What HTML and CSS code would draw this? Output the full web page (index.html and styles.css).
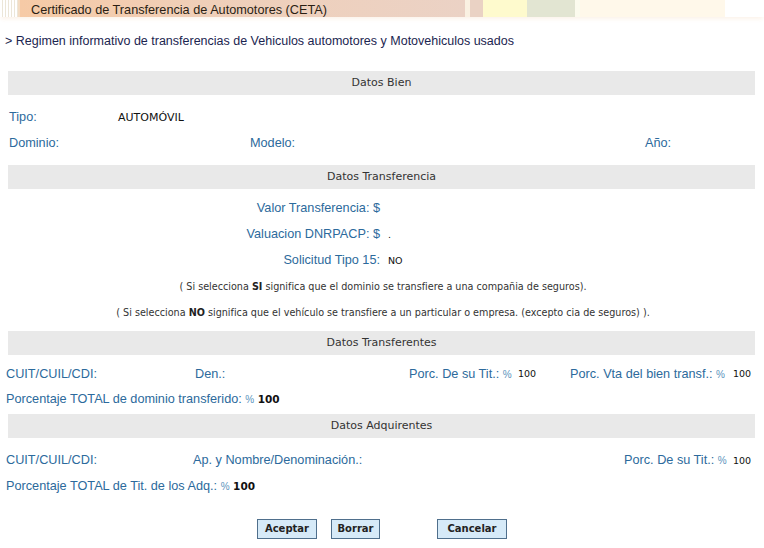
FILE: index.html
```html
<!DOCTYPE html>
<html lang="es">
<head>
<meta charset="utf-8">
<title>CETA</title>
<link rel="stylesheet" href="styles.css">
</head>
<body>
<div class="topbar">
  <div class="stripes"></div>
  <div class="seg-peach"><span class="title">Certificado de Transferencia de Automotores (CETA)</span></div>
  <div class="seg-gap"></div>
  <div class="seg-peach2"></div>
  <div class="seg-yellow"></div>
  <div class="seg-green"></div>
  <div class="seg-gap2"></div>
  <div class="seg-cream"></div>
</div>

<p class="subtitle">&gt; Regimen informativo de transferencias de Vehiculos automotores y Motovehiculos usados</p>

<div class="bar bar-first">Datos Bien</div>
<div class="block block-bien">
  <div class="row row-tipo">
    <span class="lbl">Tipo:</span>
    <span class="val">AUTOMÓVIL</span>
  </div>
  <div class="row row-dominio">
    <span class="lbl">Dominio:</span>
    <span class="lbl">Modelo:</span>
    <span class="lbl">Año:</span>
  </div>
</div>

<div class="bar">Datos Transferencia</div>
<div class="block block-transf">
  <div class="row row-pair">
    <span class="lbl right">Valor Transferencia: $</span>
    <span class="val"></span>
  </div>
  <div class="row row-pair">
    <span class="lbl right">Valuacion DNRPACP: $</span>
    <span class="val">.</span>
  </div>
  <div class="row row-pair">
    <span class="lbl right">Solicitud Tipo 15:</span>
    <span class="val">NO</span>
  </div>
  <div class="row note"><span>( Si selecciona <b>SI</b> significa que el dominio se transfiere a una compañia de seguros).</span></div>
  <div class="row note"><span>( Si selecciona <b>NO</b> significa que el vehículo se transfiere a un particular o empresa. (excepto cia de seguros) ).</span></div>
</div>

<div class="bar">Datos Transferentes</div>
<div class="block block-tes">
  <div class="row row-tes">
    <span class="lbl">CUIT/CUIL/CDI:</span>
    <span class="lbl">Den.:</span>
    <span class="lbl">Porc. De su Tit.: <span class="pct">%</span></span>
    <span class="val">100</span>
    <span class="lbl">Porc. Vta del bien transf.: <span class="pct">%</span></span>
    <span class="val">100</span>
  </div>
  <div class="row">
    <span class="lbl">Porcentaje TOTAL de dominio transferido: <span class="pct">%</span> <b class="total">100</b></span>
  </div>
</div>

<div class="bar">Datos Adquirentes</div>
<div class="block block-adq">
  <div class="row row-adq">
    <span class="lbl">CUIT/CUIL/CDI:</span>
    <span class="lbl">Ap. y Nombre/Denominación.:</span>
    <span class="lbl">Porc. De su Tit.: <span class="pct">%</span></span>
    <span class="val">100</span>
  </div>
  <div class="row">
    <span class="lbl">Porcentaje TOTAL de Tit. de los Adq.: <span class="pct">%</span> <b class="total">100</b></span>
  </div>
</div>

<div class="buttons">
  <button class="btn btn-aceptar">Aceptar</button>
  <button class="btn btn-borrar">Borrar</button>
  <button class="btn btn-cancelar">Cancelar</button>
</div>
</body>
</html>
```

FILE: styles.css
```css
* { box-sizing: border-box; }
html, body { margin: 0; padding: 0; background: #fff; }
body {
  width: 764px;
  height: 548px;
  overflow: hidden;
  font-family: "Liberation Sans", Arial, sans-serif;
  color: #222;
}

/* top banner */
.topbar {
  display: flex;
  height: 17px;
  box-shadow: 0 3px 4px -1px rgba(250, 235, 220, 0.6);
}
.stripes {
  width: 18px;
  background: repeating-linear-gradient(90deg, #fff 0 2px, #ece6d8 2px 3px);
}
.seg-peach {
  width: 447px;
  background: linear-gradient(90deg, #f6caa6 0%, #f0cfb8 40%, #ebd2c5 100%);
  border-left: 2px solid #f3dcc4;
  padding-left: 11px;
}
.title {
  font-size: 12.7px;
  line-height: 16px;
  color: #2a1e14;
}
.seg-gap { width: 5px; background: #faf1e2; }
.seg-peach2 { width: 13px; background: #ead2c4; }
.seg-yellow { width: 44px; background: #fefacd; }
.seg-green { width: 48px; background: #e2e5d2; }
.seg-gap2 { width: 5px; background: #fcfbee; }
.seg-cream { width: 145px; background: #fff8ea; }

.subtitle {
  margin: 17px 0 0 5px;
  height: 14px;
  font-size: 12.5px;
  line-height: 14px;
  color: #1b2550;
}

/* section bars */
.bar {
  margin-left: 8px;
  width: 747px;
  height: 24px;
  background: #e9e9e9;
  font-family: "DejaVu Sans", Verdana, sans-serif;
  font-size: 11px;
  line-height: 24px;
  text-align: center;
  color: #333;
}
.bar-first { margin-top: 23px; }

.row {
  display: flex;
  align-items: center;
  height: 26px;
  white-space: nowrap;
}
.lbl {
  font-size: 12.7px;
  color: #2c6a9c;
}
.val {
  font-family: "DejaVu Sans", Verdana, sans-serif;
  font-size: 9.5px;
  color: #111;
}
.pct { font-size: 10px; color: #5b94bd; }
.total {
  font-family: "DejaVu Sans", Verdana, sans-serif;
  font-size: 10.5px;
  color: #111;
}

.block-bien { padding: 9px 0 10px 9px; }
.row-tipo .lbl { width: 109px; }
.row-tipo .val { font-size: 11px; }
.row-dominio { display: grid; grid-template-columns: 241px 395px auto; height: 25px; }

.block-transf { padding: 6px 0 6px 0; }
.row-pair { display: grid; grid-template-columns: 380px auto; column-gap: 8px; }
.right { text-align: right; }
.note {
  justify-content: center;
  padding-left: 2px;
  font-family: "DejaVu Sans", Verdana, sans-serif;
  font-size: 9.65px;
  color: #333;
}
.note b { font-weight: bold; color: #222; }

.block-tes { padding: 6px 0 3px 6px; }
.block-tes .row { height: 25px; }
.row-tes { display: grid; grid-template-columns: 189px 214px 109px 52px 163px auto; }

.block-adq { padding: 9px 0 0 6px; }
.block-adq .row { height: 26px; }
.row-adq { display: grid; grid-template-columns: 187px 431px 109px auto; }

.buttons {
  display: flex;
  margin: 20px 0 0 257px;
}
.btn {
  height: 20px;
  padding: 0;
  border: 1px solid #4f6f8c;
  background: #d6eaf8;
  font-family: "DejaVu Sans", Verdana, sans-serif;
  font-size: 10px;
  font-weight: bold;
  color: #222;
  line-height: 18px;
}
.btn-aceptar { width: 60px; }
.btn-borrar { width: 49px; margin-left: 14px; }
.btn-cancelar { width: 70px; margin-left: 57px; }
```
